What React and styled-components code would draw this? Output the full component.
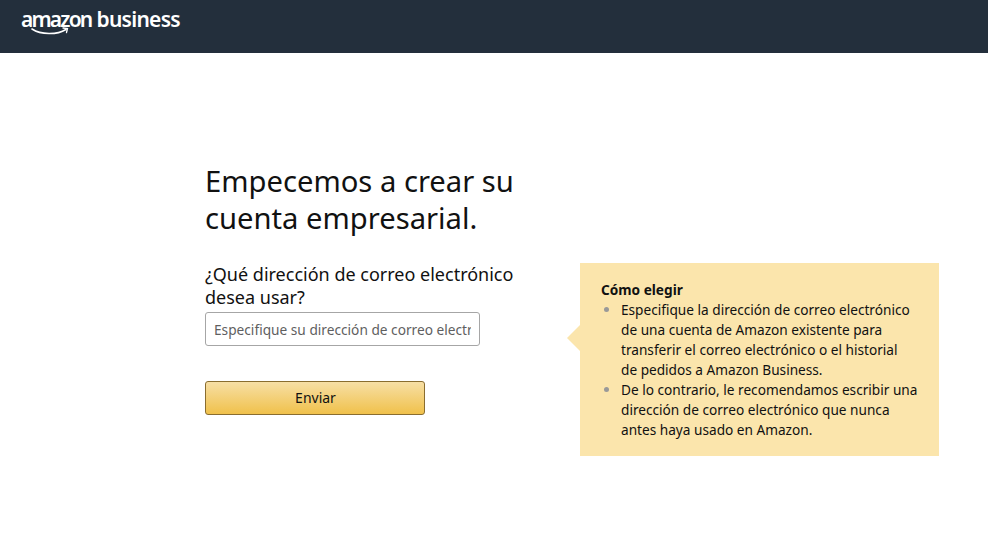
import React from "react";
import styled, { createGlobalStyle } from "styled-components";

const Global = createGlobalStyle`
  html, body { margin: 0; padding: 0; background: #fff; }
  body { font-family: "Noto Sans", "Open Sans", Arial, sans-serif; color: #111; }
  * { box-sizing: border-box; }
`;
const Page = styled.div`
  width: 988px;
  height: 546px;
  overflow: hidden;
`;
const Header = styled.header`
  height: 53px;
  background: #232f3c;
  padding: 6px 0 0 21px;
`;
const Logo = styled.div`
  position: relative;
  display: flex;
  gap: 5px;
  width: 165px;
  height: 30px;
  color: #fff;
  font-family: "Noto Sans", sans-serif;
  font-size: 21px;
  font-weight: 600;
  line-height: 26px;
  white-space: nowrap;
`;
const LogoWord = styled.span`
  letter-spacing: ${(p) => p.$spacing}px;
`;
const Smile = styled.svg`
  position: absolute;
  left: 10px;
  top: 21px;
  width: 40px;
  height: 10px;
`;
const Main = styled.main`
  display: flex;
  align-items: flex-start;
  padding: 110px 0 0 205px;
`;
const Form = styled.section`
  width: 320px;
  display: flex;
  flex-direction: column;
`;
const Title = styled.h1`
  margin: 0 0 26px;
  font-size: 29.2px;
  font-weight: 400;
  line-height: 37px;
  color: #111;
`;
const Label = styled.label`
  display: block;
  width: 315px;
  font-size: 18px;
  line-height: 23px;
  margin-bottom: 3px;
`;
const Input = styled.input`
  display: block;
  width: 275px;
  height: 34px;
  padding: 0 8px;
  border: 1px solid #a6a6a6;
  border-radius: 3px;
  font-family: inherit;
  font-size: 13.7px;
  color: #555;
  background: #fff;
  outline: none;
  &::placeholder { color: #5f5f5f; opacity: 1; }
`;
const Submit = styled.button`
  margin-top: 35px;
  width: 220px;
  height: 34px;
  border: 1px solid #8a6d2f;
  border-radius: 3px;
  background: linear-gradient(to bottom, #f7dfa5, #f0c14b 100%);
  font-family: inherit;
  font-size: 14px;
  color: #111;
  padding: 0 0 2px 1px;
`;
const Tip = styled.aside`
  position: relative;
  width: 359px;
  height: 193px;
  margin: 100px 0 0 55px;
  padding: 17px 20px 0 21px;
  background: #fbe5ac;
  font-size: 13.65px;
  line-height: 20px;
  color: #111;
  &::before {
    content: "";
    position: absolute;
    left: -13px;
    top: 62px;
    border-style: solid;
    border-width: 13px 13px 13px 0;
    border-color: transparent #fbe5ac transparent transparent;
  }
`;
const TipTitle = styled.div`
  font-weight: 700;
`;
const TipList = styled.ul`
  margin: 0;
  padding: 0 0 0 20px;
  li::marker { color: #999; }
`;

export default function App() {
  return (
    <Page>
      <Global />
      <Header>
        <Logo>
          <LogoWord $spacing={-1.8}>amazon</LogoWord>
          <LogoWord $spacing={-0.72}>business</LogoWord>
          <Smile viewBox="0 0 40 10" fill="none">
            <path d="M1 2 C 10 8, 26 8, 35 2.5" stroke="#fff" strokeWidth="1.6" strokeLinecap="round" />
            <path d="M32 1 L36.5 1.5 L35.5 5.5" stroke="#fff" strokeWidth="1.3" strokeLinecap="round" />
          </Smile>
        </Logo>
      </Header>
      <Main>
        <Form>
          <Title>Empecemos a crear su cuenta empresarial.</Title>
          <Label htmlFor="email">¿Qué dirección de correo electrónico desea usar?</Label>
          <Input id="email" placeholder="Especifique su dirección de correo electrónico" />
          <Submit>Enviar</Submit>
        </Form>
        <Tip>
          <TipTitle>Cómo elegir</TipTitle>
          <TipList>
            <li>Especifique la dirección de correo electrónico de una cuenta de Amazon existente para transferir el correo electrónico o el historial<br />de pedidos a Amazon Business.</li>
            <li>De lo contrario, le recomendamos escribir una dirección de correo electrónico que nunca antes haya usado en Amazon.</li>
          </TipList>
        </Tip>
      </Main>
    </Page>
  );
}
